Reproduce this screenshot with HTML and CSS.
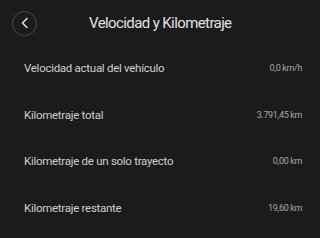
FILE: index.html
```html
<!DOCTYPE html>
<html lang="es">
<head>
<meta charset="utf-8">
<link rel="stylesheet" href="styles.css">
</head>
<body>
<div class="screen">
  <header class="header">
    <button class="back" aria-label="Atrás">
      <svg width="10" height="12" viewBox="0 0 10 12"><path d="M7 1.5 L2.5 6 L7 10.5" fill="none" stroke="#e6e6e6" stroke-width="1.5" stroke-linecap="round" stroke-linejoin="round"/></svg>
    </button>
    <h1 class="title">Velocidad y Kilometraje</h1>
  </header>
  <ul class="list">
    <li class="row"><span class="label">Velocidad actual del vehículo</span><span class="value">0,0 km/h</span></li>
    <li class="row"><span class="label">Kilometraje total</span><span class="value">3.791,45 km</span></li>
    <li class="row"><span class="label">Kilometraje de un solo trayecto</span><span class="value">0,00 km</span></li>
    <li class="row"><span class="label">Kilometraje restante</span><span class="value">19,60 km</span></li>
  </ul>
</div>
</body>
</html>
```
FILE: styles.css
```css
html, body {
  margin: 0;
  padding: 0;
  background: #1b1b1b;
}
body {
  font-family: Roboto, "Noto Sans", sans-serif;
  width: 320px;
  height: 238px;
  overflow: hidden;
}
.screen {
  display: flex;
  flex-direction: column;
}
.header {
  height: 45px;
  display: flex;
  align-items: center;
  padding-left: 12px;
}
.back {
  width: 25px;
  height: 25px;
  border-radius: 50%;
  border: 1px solid #4a4a4a;
  background: transparent;
  padding: 0;
  display: flex;
  align-items: center;
  justify-content: center;
  margin-top: 1px;
}
.title {
  margin: 0 0 0 52px;
  font-size: 15px;
  font-weight: 400;
  color: #e2e2e2;
  letter-spacing: -0.6px;
}
.list {
  list-style: none;
  margin: 0;
  padding: 0;
}
.row {
  height: 46.5px;
  display: flex;
  align-items: center;
  justify-content: space-between;
  padding: 0 18px 0 24px;
}
.label {
  font-size: 11.5px;
  color: #cfcfcf;
  letter-spacing: -0.28px;
}
.value {
  font-size: 9px;
  color: #a8a8a8;
  letter-spacing: -0.35px;
}
```
